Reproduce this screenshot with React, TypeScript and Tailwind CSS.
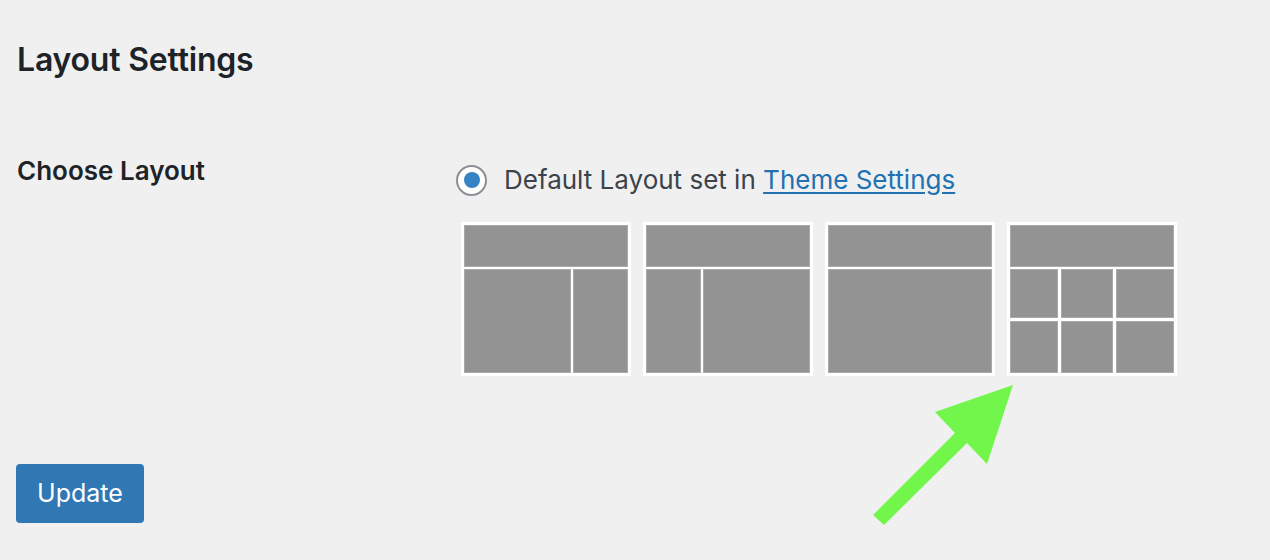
import React from "react";

const Block = ({ className = "" }: { className?: string }) => (
  <div className={`bg-[#929392] border border-[#a9aaa9] ${className}`} />
);

export default function App() {
  return (
    <div className="relative min-h-[560px] w-[1270px] bg-[#f0f0f1] font-['Inter','Liberation_Sans',sans-serif] overflow-hidden">
      <h2 className="pl-[17px] pt-[42px] text-[32px] leading-[36px] font-semibold text-[#1d2327] tracking-[-0.2px]">
        Layout Settings
      </h2>
      <div className="flex mt-[78px]">
        <div className="w-[456px] pl-[17px] text-[26px] leading-[30px] font-semibold text-[#1d2327]">
          Choose Layout
        </div>
        <div className="flex flex-col pt-[8px]">
          <label className="flex items-center gap-[17px] text-[26px] leading-[32px] text-[#3c434a]">
            <span className="w-[31px] h-[31px] rounded-full border-2 border-[#8c8f94] bg-white flex items-center justify-center">
              <span className="w-[16px] h-[16px] rounded-full bg-[#3582c4]" />
            </span>
            <span>
              Default Layout set in{" "}
              <a className="text-[#2271b1] underline underline-offset-[3px]">Theme Settings</a>
            </span>
          </label>
          <div className="flex gap-[12px] mt-[26px] ml-[5px]">
            {/* tile 1 */}
            <div className="w-[170px] h-[154px] bg-white p-[3px] flex flex-col gap-[2px]">
              <Block className="h-[42px]" />
              <div className="flex-1 flex gap-[2px]">
                <Block className="w-[107px]" />
                <Block className="flex-1" />
              </div>
            </div>
            {/* tile 2 */}
            <div className="w-[170px] h-[154px] bg-white p-[3px] flex flex-col gap-[2px]">
              <Block className="h-[42px]" />
              <div className="flex-1 flex gap-[2px]">
                <Block className="w-[55px]" />
                <Block className="flex-1" />
              </div>
            </div>
            {/* tile 3 */}
            <div className="w-[170px] h-[154px] bg-white p-[3px] flex flex-col gap-[2px]">
              <Block className="h-[42px]" />
              <Block className="flex-1" />
            </div>
            {/* tile 4 */}
            <div className="w-[170px] h-[154px] bg-white p-[3px] flex flex-col gap-[2px]">
              <Block className="h-[42px]" />
              <div className="flex-1 flex flex-col gap-[3px]">
                <div className="h-[49px] flex gap-[3px]">
                  <Block className="w-[48px]" />
                  <Block className="w-[52px]" />
                  <Block className="flex-1" />
                </div>
                <div className="flex-1 flex gap-[3px]">
                  <Block className="w-[48px]" />
                  <Block className="w-[52px]" />
                  <Block className="flex-1" />
                </div>
              </div>
            </div>
          </div>
        </div>
      </div>
      <div className="pl-[16px] mt-[88px]">
        <button className="w-[128px] h-[59px] rounded-[4px] bg-[#3078b4] text-white text-[25px] leading-none">
          Update
        </button>
      </div>
      <svg
        className="absolute left-0 top-0 pointer-events-none"
        width="1270"
        height="560"
        viewBox="0 0 1270 560"
      >
        <polygon
          points="1013,385 987,464 967,443 884,525 873,515 955,433 935,412"
          fill="#72f64b"
        />
      </svg>
    </div>
  );
}
